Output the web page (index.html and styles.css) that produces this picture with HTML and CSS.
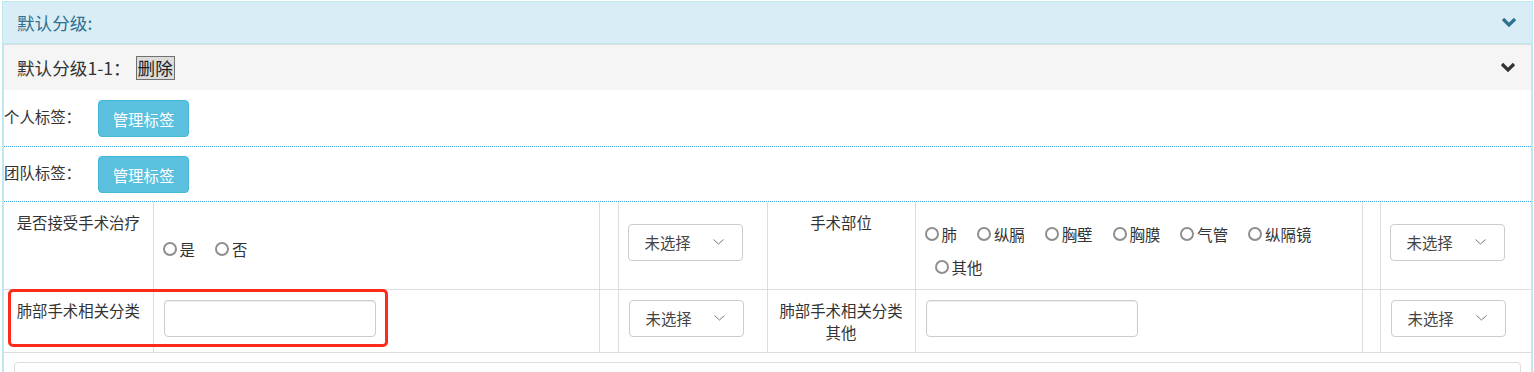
FILE: index.html
```html
<!DOCTYPE html>
<html lang="zh-CN">
<head>
    <meta charset="UTF-8">
    <title>默认分级</title>
    <link rel="stylesheet" href="styles.css">
</head>
<body>
<div class="panel">
    <div class="panel-heading">
        <span class="panel-title">默认分级:</span>
        <svg class="chevron" width="16" height="11" viewBox="0 0 16 11"><polyline points="2,2 8,8 14,2"/></svg>
    </div>
    <div class="sub-panel">
        <div class="sub-heading">
            <span class="sub-title">默认分级1-1：</span>
            <button class="btn-del">删除</button>
            <svg class="chevron dark" width="16" height="11" viewBox="0 0 16 11"><polyline points="2,2 8,8 14,2"/></svg>
        </div>
        <div class="sub-body">
            <div class="tag-row">
                <span class="tag-label">个人标签：</span>
                <button class="btn-info">管理标签</button>
            </div>
            <div class="tag-row">
                <span class="tag-label">团队标签：</span>
                <button class="btn-info">管理标签</button>
            </div>

            <div class="grid-wrap">
                <table class="grid">
                    <colgroup>
                        <col style="width:149px">
                        <col style="width:446px">
                        <col style="width:19px">
                        <col style="width:149px">
                        <col style="width:148px">
                        <col style="width:447px">
                        <col style="width:18px">
                        <col>
                    </colgroup>
                    <tr class="row-a">
                        <td class="lbl">是否接受手术治疗</td>
                        <td class="ctl mid">
                            <label class="radio"><span class="dot"></span>是</label><label class="radio"><span class="dot"></span>否</label>
                        </td>
                        <td></td>
                        <td class="ctl mid">
                            <div class="select">未选择<svg width="11" height="6" viewBox="0 0 11 6"><polyline points="0.5,0.5 5.5,5 10.5,0.5"/></svg></div>
                        </td>
                        <td class="lbl">手术部位</td>
                        <td class="ctl">
                            <label class="radio"><span class="dot"></span>肺</label><label class="radio"><span class="dot"></span>纵膈</label><label class="radio"><span class="dot"></span>胸壁</label><label class="radio"><span class="dot"></span>胸膜</label><label class="radio"><span class="dot"></span>气管</label><label class="radio"><span class="dot"></span>纵隔镜</label><label class="radio wrapped"><span class="dot"></span>其他</label>
                        </td>
                        <td></td>
                        <td class="ctl mid">
                            <div class="select">未选择<svg width="11" height="6" viewBox="0 0 11 6"><polyline points="0.5,0.5 5.5,5 10.5,0.5"/></svg></div>
                        </td>
                    </tr>
                    <tr class="row-b">
                        <td class="lbl">肺部手术相关分类</td>
                        <td class="ctl mid"><input class="text-input" type="text"></td>
                        <td></td>
                        <td class="ctl mid">
                            <div class="select">未选择<svg width="11" height="6" viewBox="0 0 11 6"><polyline points="0.5,0.5 5.5,5 10.5,0.5"/></svg></div>
                        </td>
                        <td class="lbl">肺部手术相关分类<br>其他</td>
                        <td class="ctl mid"><input class="text-input" type="text"></td>
                        <td></td>
                        <td class="ctl mid">
                            <div class="select">未选择<svg width="11" height="6" viewBox="0 0 11 6"><polyline points="0.5,0.5 5.5,5 10.5,0.5"/></svg></div>
                        </td>
                    </tr>
                </table>
                <div class="highlight"></div>
            </div>

            <div class="well"></div>
        </div>
    </div>
</div>
</body>
</html>
```

FILE: styles.css
```css
* {
    box-sizing: border-box;
}
body {
    margin: 0;
    font-family: "Noto Sans CJK SC", "Liberation Sans", sans-serif;
    font-size: 15.4px;
    line-height: 22px;
    color: #333;
    background: #fff;
}
.panel {
    margin: 1px 1px 0 2px;
    border: 1px solid #bce8f1;
    border-bottom: none;
}
.panel-heading {
    display: flex;
    align-items: center;
    justify-content: space-between;
    height: 42px;
    padding: 0 15px 0 14px;
    background-color: #d9edf7;
    border-bottom: 1px solid #bce8f1;
    color: #31708f;
}
.panel-title {
    font-size: 17.6px;
}
.chevron {
    fill: none;
    stroke: #31708f;
    stroke-width: 3.2;
}
.chevron.dark {
    stroke: #333;
    margin-left: auto;
}
.sub-panel {
    border: 1px solid #ddd;
    border-bottom: none;
}
.sub-heading {
    display: flex;
    align-items: center;
    height: 45px;
    padding: 0 15px 0 13px;
    background-color: #f5f5f5;
    font-size: 17.6px;
}
.sub-title {
    margin-right: 5px;
}
.btn-del {
    font-family: inherit;
    font-size: 17.6px;
    line-height: 22px;
    height: 24px;
    padding: 0 1px;
    color: #222;
    background: #dcdcdc;
    border: 1px solid #707070;
    border-radius: 0;
}
.tag-row {
    display: flex;
    align-items: center;
    height: 57px;
    padding-top: 1px;
    border-bottom: 1px dotted #3ba3e0;
}
.tag-row + .tag-row {
    height: 55px;
}
.tag-label {
    width: 94px;
    padding-bottom: 5px;
}
.btn-info {
    width: 91px;
    height: 37px;
    padding: 0;
    font-family: inherit;
    font-size: 15.4px;
    color: #fff;
    background-color: #5bc0de;
    border: 1px solid #46b8da;
    border-radius: 4px;
}
.grid-wrap {
    position: relative;
}
.grid {
    width: 100%;
    table-layout: fixed;
    border-collapse: collapse;
}
.grid td {
    border: 1px solid #ddd;
    border-top: none;
    padding: 8px 10px;
    vertical-align: top;
}
.grid td:first-child {
    border-left: none;
}
.grid td:last-child {
    border-right: none;
}
.grid td.lbl {
    text-align: center;
    padding-top: 9px;
}
.row-b td.lbl {
    padding-bottom: 9px;
}
.grid td.mid {
    vertical-align: middle;
}
.row-a td.ctl {
    padding-top: 10px;
    padding-bottom: 11px;
    padding-left: 9px;
}
.radio {
    display: inline-flex;
    align-items: center;
    height: 33px;
    padding-top: 11px;
    margin-right: 20px;
    white-space: nowrap;
}
.mid .radio {
    margin-bottom: 4px;
}
.dot {
    flex: none;
    display: inline-block;
    box-sizing: content-box;
    width: 10px;
    height: 10px;
    margin-right: 3px;
    border: 2px solid #8f8f8f;
    border-radius: 50%;
    background: #fff;
}
.radio.wrapped {
    margin-left: 10px;
}
.select {
    display: flex;
    align-items: center;
    justify-content: space-between;
    width: 115px;
    height: 37px;
    margin-bottom: 6px;
    padding: 0 18px 0 16px;
    border: 1px solid #ccc;
    border-radius: 4px;
    color: #444;
    background: #fff;
}
.select svg {
    fill: none;
    stroke: #777;
    stroke-width: 1;
}
.text-input {
    display: block;
    width: 212px;
    height: 37px;
    margin-bottom: 6px;
    border: 1px solid #ccc;
    border-radius: 4px;
    box-shadow: inset 0 1px 1px rgba(0,0,0,0.075);
}
.highlight {
    position: absolute;
    left: 4px;
    top: 87px;
    width: 380px;
    height: 58px;
    border: 3px solid #ff2a1c;
    border-radius: 5px;
}
.well {
    height: 60px;
    margin: 9px 10px 0 10px;
    border: 1px solid #ddd;
    border-radius: 4px;
}
```
